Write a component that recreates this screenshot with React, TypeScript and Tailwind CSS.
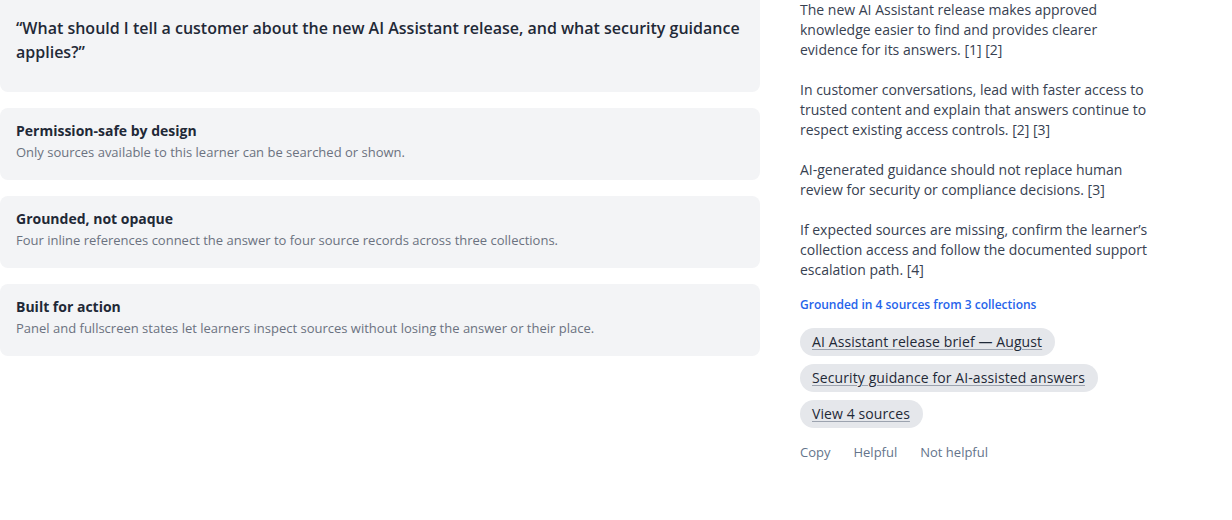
import React from 'react';

const features = [
  {
    title: 'Permission-safe by design',
    body: 'Only sources available to this learner can be searched or shown.',
  },
  {
    title: 'Grounded, not opaque',
    body: 'Four inline references connect the answer to four source records across three collections.',
  },
  {
    title: 'Built for action',
    body: 'Panel and fullscreen states let learners inspect sources without losing the answer or their place.',
  },
];

const paragraphs = [
  'The new AI Assistant release makes approved knowledge easier to find and provides clearer evidence for its answers. [1] [2]',
  'In customer conversations, lead with faster access to trusted content and explain that answers continue to respect existing access controls. [2] [3]',
  'AI-generated guidance should not replace human review for security or compliance decisions. [3]',
  'If expected sources are missing, confirm the learner\u2019s collection access and follow the documented support escalation path. [4]',
];

const chips = [
  'AI Assistant release brief \u2014 August',
  'Security guidance for AI-assisted answers',
  'View 4 sources',
];

const App: React.FC = () => {
  return (
    <div className="w-[1232px] h-[520px] overflow-hidden bg-white font-['Open_Sans',sans-serif]">
      <div className="flex gap-10">
        {/* left column */}
        <div className="w-[760px] flex flex-col gap-4">
          <div className="-mt-2 bg-[#f3f4f6] rounded-lg px-4 pt-6 pb-7">
            <p className="text-[16px] leading-6 font-semibold text-[#1f2937]">
              &ldquo;What should I tell a customer about the new AI Assistant release, and what security guidance applies?&rdquo;
            </p>
          </div>

          {features.map((f) => (
            <div key={f.title} className="bg-[#f3f4f6] rounded-lg px-4 pt-[13px] pb-[18px]">
              <h3 className="text-[14px] leading-5 font-bold text-[#1f2937]">{f.title}</h3>
              <p className="mt-px text-[13px] leading-5 text-[#6b7280]">{f.body}</p>
            </div>
          ))}
        </div>

        {/* right column: answer */}
        <div className="w-[352px]">
          <div className="flex flex-col gap-5 text-[14px] leading-5 text-[#374151]">
            {paragraphs.map((p) => (
              <p key={p}>{p}</p>
            ))}
          </div>

          <p className="mt-[17px] text-[12px] leading-4 font-semibold text-[#2563eb]">
            Grounded in 4 sources from 3 collections
          </p>

          <div className="mt-[15px] flex flex-col items-start gap-2">
            {chips.map((c) => (
              <button
                key={c}
                className="bg-[#e5e7eb] rounded-full pl-3 pr-[13px] py-1 text-[14px] leading-5 tracking-[0.1px] text-[#1f2937] underline decoration-[#9ca3af] underline-offset-2"
              >
                {c}
              </button>
            ))}
          </div>

          <div className="mt-4 flex gap-[23px] text-[13px] leading-4 font-medium text-[#64748b]">
            <button>Copy</button>
            <button>Helpful</button>
            <button>Not helpful</button>
          </div>
        </div>
      </div>
    </div>
  );
};

export default App;
